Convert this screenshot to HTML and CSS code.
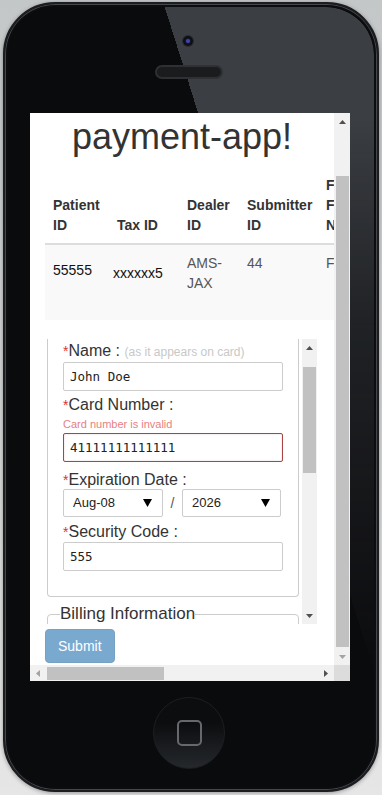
FILE: index.html
```html
<!DOCTYPE html>
<html lang="en">
<head>
    <meta charset="UTF-8">
    <meta name="viewport" content="width=device-width, initial-scale=1.0">
    <title>payment-app</title>
    <link rel="stylesheet" href="styles.css">
</head>
<body>
    <div class="phone">
        <span class="camera"></span>
        <span class="speaker"></span>

        <div class="screen">
            <div class="viewport">
                <h1>payment-app!</h1>

                <table class="claims">
                    <colgroup>
                        <col style="width: 64px">
                        <col style="width: 70px">
                        <col style="width: 60px">
                        <col style="width: 79px">
                        <col style="width: 70px">
                    </colgroup>
                    <thead>
                        <tr>
                            <th>Patient ID</th>
                            <th>Tax ID</th>
                            <th>Dealer ID</th>
                            <th>Submitter ID</th>
                            <th>Full Facility Name</th>
                        </tr>
                    </thead>
                    <tbody>
                        <tr>
                            <td class="val-patient">55555</td>
                            <td class="val-tax">xxxxxx5</td>
                            <td>AMS-JAX</td>
                            <td>44</td>
                            <td>Florida</td>
                        </tr>
                    </tbody>
                </table>

                <div class="frame">
                    <div class="frame-body">
                        <fieldset class="card-info">
                            <label class="field-label"><span class="req">*</span>Name : <small class="hint">(as it appears on card)</small></label>
                            <div class="input">John Doe</div>

                            <label class="field-label label-card"><span class="req">*</span>Card Number :</label>
                            <div class="error-text">Card number is invalid</div>
                            <div class="input input-error">41111111111111</div>

                            <label class="field-label label-exp"><span class="req">*</span>Expiration Date :</label>
                            <div class="exp-row">
                                <div class="select">
                                    <span>Aug-08</span>
                                    <svg width="9" height="8" viewBox="0 0 9 8"><polygon points="0,0 9,0 4.5,8" fill="#000"/></svg>
                                </div>
                                <span class="slash">/</span>
                                <div class="select">
                                    <span>2026</span>
                                    <svg width="9" height="8" viewBox="0 0 9 8"><polygon points="0,0 9,0 4.5,8" fill="#000"/></svg>
                                </div>
                            </div>

                            <label class="field-label label-cvv"><span class="req">*</span>Security Code :</label>
                            <div class="input">555</div>
                        </fieldset>

                        <fieldset class="billing">
                            <legend>Billing Information</legend>
                        </fieldset>
                    </div>

                    <!-- scrollbar of the inner form frame -->
                    <div class="vbar frame-bar">
                        <span class="arrow"><svg width="7" height="4" viewBox="0 0 7 4"><polygon points="0,4 3.5,0 7,4" fill="#505050"/></svg></span>
                        <span class="thumb"></span>
                        <span class="arrow arrow-end"><svg width="7" height="4" viewBox="0 0 7 4"><polygon points="0,0 7,0 3.5,4" fill="#505050"/></svg></span>
                    </div>
                </div>

                <button class="btn-submit" disabled>Submit</button>
            </div>

            <!-- page scrollbars -->
            <div class="vbar page-bar">
                <span class="arrow"><svg width="7" height="4" viewBox="0 0 7 4"><polygon points="0,4 3.5,0 7,4" fill="#505050"/></svg></span>
                <span class="thumb"></span>
                <span class="arrow arrow-end"><svg width="7" height="4" viewBox="0 0 7 4"><polygon points="0,0 7,0 3.5,4" fill="#a3a3a3"/></svg></span>
            </div>
            <div class="hbar">
                <span class="arrow"><svg width="4" height="7" viewBox="0 0 4 7"><polygon points="4,0 4,7 0,3.5" fill="#a3a3a3"/></svg></span>
                <span class="thumb"></span>
                <span class="arrow arrow-end"><svg width="4" height="7" viewBox="0 0 4 7"><polygon points="0,0 4,3.5 0,7" fill="#505050"/></svg></span>
            </div>
            <div class="corner"></div>
        </div>

        <div class="home"><span></span></div>
    </div>
</body>
</html>
```

FILE: styles.css
```css
body {
    margin: 0;
    width: 382px;
    height: 795px;
    overflow: hidden;
    background: linear-gradient(#c3c7c8, #d6d8d8 60%, #e6e6e6);
    font-family: "Liberation Sans", Arial, sans-serif;
}

/* Phone body */
.phone {
    position: relative;
    box-sizing: border-box;
    width: 376px;
    height: 790px;
    margin: 2px 0 0 3px;
    border: 2px solid #1c1d20;
    border-radius: 52px;
    background: #0a0b0d;
    box-shadow: inset 0 0 0 1px #45474b, inset 0 0 0 3px #0c0d0f, 0 1px 4px rgba(0, 0, 0, .35);
    display: flex;
    flex-direction: column;
    align-items: flex-start;
}
.phone::before {
    /* glossy reflection on the upper right */
    content: "";
    position: absolute;
    inset: 3px;
    border-radius: 48px;
    background: linear-gradient(72.5deg, transparent 384px, #3b3e43 384px);
    -webkit-mask-image: linear-gradient(#000 110px, rgba(0, 0, 0, .45) 320px, transparent 680px);
    mask-image: linear-gradient(#000 110px, rgba(0, 0, 0, .45) 320px, transparent 680px);
}
.camera {
    position: relative;
    width: 10px;
    height: 10px;
    margin: 32px 0 0 178px;
    border-radius: 50%;
    background: radial-gradient(circle, #3b46a8 0 1.5px, #151728 2.5px, #0d0d10 4px);
    box-shadow: 0 0 0 1px #2a2b2e;
}
.speaker {
    position: relative;
    box-sizing: border-box;
    width: 68px;
    height: 14px;
    margin: 19px 0 0 150px;
    border-radius: 7px;
    border: 2px solid #2e3033;
    background: #0d0e10;
    background-image: radial-gradient(#2a2b2e 0.6px, transparent 0.8px);
    background-size: 2px 2px;
}

/* Screen */
.screen {
    position: relative;
    z-index: 1;
    width: 320px;
    height: 568px;
    margin: 34px 0 0 25px;
    background: #fff;
    display: grid;
    grid-template-columns: 304px 16px;
    grid-template-rows: 552px 16px;
}
.viewport {
    overflow: hidden;
    color: #333;
    font-size: 14px;
    line-height: 20px;
}
h1 {
    margin: 4px 0 10px;
    font-size: 36px;
    line-height: 40px;
    font-weight: normal;
    text-align: center;
    color: #333;
}

/* Table */
.claims {
    margin-left: 15px;
    width: 343px;
    table-layout: fixed;
    border-collapse: collapse;
}
.claims th {
    padding: 8px;
    text-align: left;
    vertical-align: bottom;
    font-weight: bold;
    border-bottom: 2px solid #ddd;
    white-space: normal;
}
.claims tbody tr {
    height: 76px;
    background: #f9f9f9;
}
.claims td {
    padding: 8px;
    vertical-align: top;
    color: #555;
    white-space: normal;
    overflow: hidden;
}
.claims td.val-patient {
    padding-top: 15px;
    color: #111;
}
.claims td.val-tax {
    padding: 18px 0 8px 4px;
    color: #111;
}

/* Inner form frame */
.frame {
    display: flex;
    width: 272px;
    height: 285px;
    margin: 19px 0 0 15px;
}
.frame-body {
    width: 257px;
    overflow: hidden;
}
fieldset {
    margin: 0;
    padding: 0;
    border: 1px solid #ccc;
}
.card-info {
    margin: 0 3px 0 2px;
    padding: 2px 15px 25px;
    border-top: 0;
    border-radius: 0 0 4px 4px;
}
.field-label {
    display: block;
    font-size: 16px;
    line-height: 20px;
    color: #333;
}
.req {
    color: #d9342b;
    font-size: 14px;
}
.hint {
    font-size: 12px;
    color: #c8c8c8;
}
.label-card { margin-top: 4px; }
.label-exp { margin-top: 8px; }
.label-cvv { margin-top: 5px; }
.error-text {
    margin: 1px 0 1px;
    font-size: 11px;
    line-height: 16px;
    color: #e77f82;
}
.input {
    box-sizing: border-box;
    height: 29px;
    padding: 0 6px;
    border: 1px solid #ccc;
    border-radius: 2px;
    font-family: "DejaVu Sans Mono", "Liberation Mono", monospace;
    font-size: 12.5px;
    line-height: 27px;
    color: #222;
}
.input-error {
    border-color: #a94442;
    box-shadow: inset 0 0 2px rgba(169, 68, 66, .25);
}
.exp-row {
    display: flex;
    align-items: center;
    margin-top: -1px;
}
.select {
    box-sizing: border-box;
    width: 100px;
    height: 28px;
    padding: 0 10px 0 9px;
    border: 1px solid #ccc;
    border-radius: 2px;
    display: flex;
    align-items: center;
    justify-content: space-between;
    font-size: 13px;
    color: #222;
}
.exp-row .select:last-child { width: 99px; }
.slash {
    width: 19px;
    text-align: center;
    font-size: 14px;
    color: #555;
}
.billing {
    margin: 7px 3px 0 2px;
    height: 40px;
    padding: 0 12px;
    border-radius: 4px;
}
.billing legend {
    padding: 0;
    font-size: 17px;
    line-height: 20px;
    color: #333;
}

/* Submit button */
.btn-submit {
    display: block;
    margin: 5px 0 0 15px;
    padding: 6px 12px;
    border: 1px solid #77a0c4;
    border-radius: 4px;
    background: #7aa9d0;
    color: #fff;
    font-family: inherit;
    font-size: 14px;
    line-height: 20px;
}

/* Fake scrollbars */
.vbar {
    display: flex;
    flex-direction: column;
    align-items: center;
    background: #f1f1f1;
}
.vbar .arrow {
    height: 17px;
    display: flex;
    align-items: center;
    justify-content: center;
}
.vbar .arrow-end { margin-top: auto; }
.vbar .thumb {
    width: 13px;
    background: #c1c1c1;
}
.page-bar .thumb {
    margin-top: 46px;
    height: 471px;
}
.frame-bar {
    width: 15px;
}
.frame-bar .thumb {
    margin-top: 11px;
    height: 106px;
}
.hbar {
    display: flex;
    align-items: center;
    background: #f1f1f1;
}
.hbar .arrow {
    width: 16px;
    height: 16px;
    display: flex;
    align-items: center;
    justify-content: center;
}
.hbar .arrow-end { margin-left: auto; }
.hbar .thumb {
    width: 117px;
    height: 13px;
    margin-left: 1px;
    background: #c1c1c1;
}
.corner {
    background: #dcdcdc;
}

/* Home button */
.home {
    position: relative;
    box-sizing: border-box;
    width: 72px;
    height: 72px;
    margin: 16px 0 0 148px;
    border-radius: 50%;
    border: 1px solid #1d1e21;
    background: linear-gradient(#0c0d0f 35%, #25282c);
    display: flex;
    align-items: center;
    justify-content: center;
}
.home span {
    box-sizing: border-box;
    width: 25px;
    height: 26px;
    border: 2px solid #65686c;
    border-radius: 5px;
}
```
